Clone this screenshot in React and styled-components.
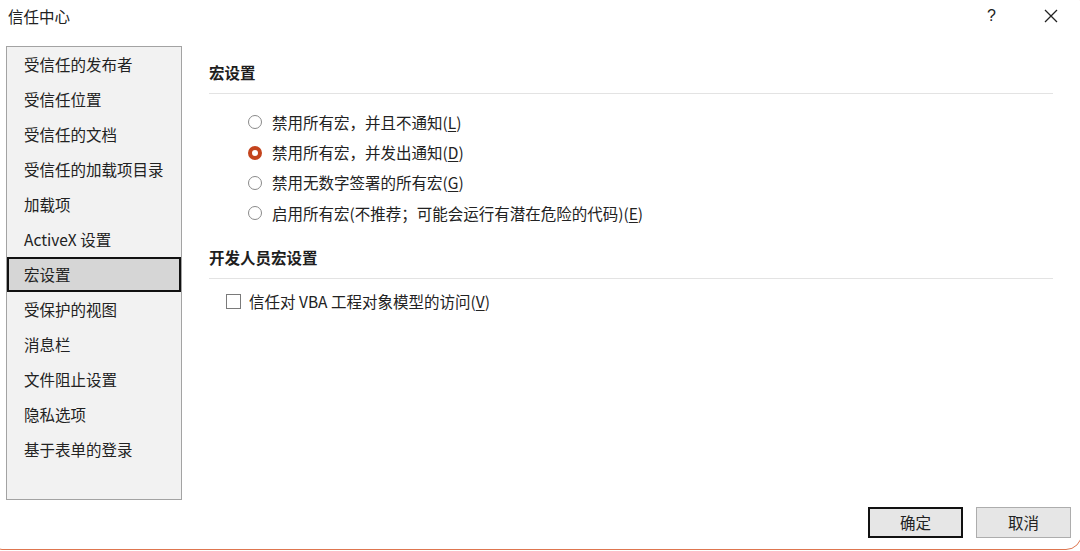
import React from "react";
import styled, { createGlobalStyle } from "styled-components";

const Global = createGlobalStyle`
  html, body { margin: 0; padding: 0; background: #fff; }
  body { font-family: "Noto Sans CJK SC", "Noto Sans", sans-serif; color: #222; }
  * { box-sizing: border-box; }
`;

const Dialog = styled.div`
  position: relative;
  width: 1080px;
  height: 551px;
  overflow: hidden;
  background: #fff;
  display: flex;
  flex-direction: column;
`;

const Frame = styled.div`
  position: absolute;
  left: -14px;
  right: -2px;
  top: -10px;
  bottom: 1px;
  border: 1.5px solid #de7650;
  border-radius: 16px;
  pointer-events: none;
`;

const TitleBar = styled.div`
  height: 34px;
  display: flex;
  align-items: center;
  padding: 0 0 2px 8px;
  font-size: 15.5px;
  color: #222;
`;

const Title = styled.div`
  flex: 1;
`;

const TitleButton = styled.div`
  width: 59px;
  display: flex;
  align-items: center;
  justify-content: center;
  font-size: 16px;
  color: #222;
  font-family: "Liberation Sans", sans-serif;
`;

const Body = styled.div`
  flex: 1;
  display: flex;
  padding: 12px 27px 0 6px;
`;

const Sidebar = styled.div`
  width: 176px;
  border: 1px solid #a3a3a3;
  background: #f2f2f2;
  display: flex;
  flex-direction: column;
`;

const NavItem = styled.div`
  height: 35px;
  display: flex;
  align-items: center;
  padding: 0 0 2px ${(p) => (p.$active ? "15px" : "17px")};
  font-size: 15.5px;
  color: #222;
  background: ${(p) => (p.$active ? "#d6d6d6" : "transparent")};
  border: ${(p) => (p.$active ? "2px solid #111" : "none")};
`;

const Content = styled.div`
  flex: 1;
  margin-left: 27px;
  padding-top: 15px;
  display: flex;
  flex-direction: column;
`;

const Heading = styled.div`
  height: 22px;
  line-height: 22px;
  font-size: 15.5px;
  font-weight: 700;
  color: #1e1e1e;
  margin-top: ${(p) => p.$mt || 0}px;
`;

const Divider = styled.div`
  height: 1px;
  background: #e3e3e3;
  margin-top: 10px;
`;

const Options = styled.div`
  display: flex;
  flex-direction: column;
  padding-left: ${(p) => p.$indent}px;
  margin-top: ${(p) => p.$mt}px;
`;

const OptionRow = styled.div`
  height: ${(p) => p.$h || 30}px;
  display: flex;
  align-items: center;
  font-size: 15.5px;
  color: #222;
`;

const Label = styled.span`
  padding-bottom: 1px;
`;

const Radio = styled.span`
  width: 14px;
  height: 14px;
  border-radius: 50%;
  background: #fff;
  border: ${(p) => (p.$checked ? "4px solid #c4441d" : "1px solid #8a8a8a")};
  margin-right: 10px;
  flex-shrink: 0;
`;

const Checkbox = styled.span`
  width: 15px;
  height: 15px;
  background: #fff;
  border: 1px solid #7a7a7a;
  margin-right: 8px;
  flex-shrink: 0;
`;

const Key = styled.span`
  text-decoration: underline;
  text-underline-offset: 2px;
`;

const Footer = styled.div`
  height: 51px;
  display: flex;
  justify-content: flex-end;
  align-items: flex-start;
  gap: 13px;
  padding: 7px 9px 0 0;
`;

const Button = styled.div`
  width: 95px;
  height: 31px;
  display: flex;
  align-items: center;
  justify-content: center;
  padding-bottom: 1px;
  background: #e6e6e6;
  font-size: 15.5px;
  color: #222;
  border: ${(p) => (p.$default ? "2px solid #111" : "1px solid #adadad")};
`;

const navItems = [
  "受信任的发布者",
  "受信任位置",
  "受信任的文档",
  "受信任的加载项目录",
  "加载项",
  "ActiveX 设置",
  "宏设置",
  "受保护的视图",
  "消息栏",
  "文件阻止设置",
  "隐私选项",
  "基于表单的登录",
];

const radios = [
  { text: "禁用所有宏，并且不通知(", key: "L", checked: false },
  { text: "禁用所有宏，并发出通知(", key: "D", checked: true },
  { text: "禁用无数字签署的所有宏(", key: "G", checked: false },
  { text: "启用所有宏(不推荐；可能会运行有潜在危险的代码)(", key: "E", checked: false },
];

export default function App() {
  return (
    <>
      <Global />
      <Dialog>
        <TitleBar>
          <Title>信任中心</Title>
          <TitleButton>?</TitleButton>
          <TitleButton>
            <svg width="14" height="14" viewBox="0 0 14 14">
              <path d="M1 1 L13 13 M13 1 L1 13" stroke="#222" strokeWidth="1.3" fill="none" />
            </svg>
          </TitleButton>
        </TitleBar>
        <Body>
          <Sidebar>
            {navItems.map((n) => (
              <NavItem key={n} $active={n === "宏设置"}>
                {n}
              </NavItem>
            ))}
          </Sidebar>
          <Content>
            <Heading>宏设置</Heading>
            <Divider />
            <Options $indent={39} $mt={13}>
              {radios.map((r) => (
                <OptionRow key={r.key} $h={30.4}>
                  <Radio $checked={r.checked} />
                  <Label>
                    {r.text}
                    <Key>{r.key}</Key>)
                  </Label>
                </OptionRow>
              ))}
            </Options>
            <Heading $mt={17}>开发人员宏设置</Heading>
            <Divider />
            <Options $indent={17} $mt={8}>
              <OptionRow>
                <Checkbox />
                <Label>
                  信任对 VBA 工程对象模型的访问(<Key>V</Key>)
                </Label>
              </OptionRow>
            </Options>
          </Content>
        </Body>
        <Footer>
          <Button $default>确定</Button>
          <Button>取消</Button>
        </Footer>
        <Frame />
      </Dialog>
    </>
  );
}
